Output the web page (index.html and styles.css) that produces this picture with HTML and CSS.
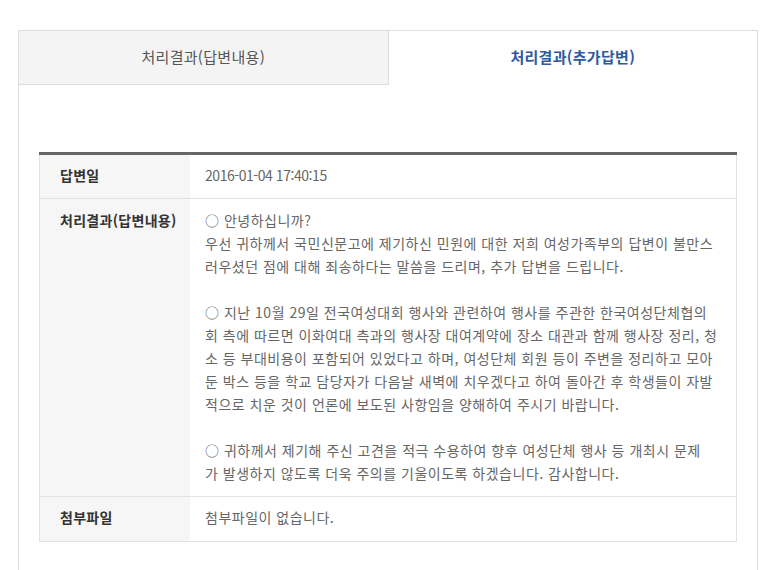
FILE: index.html
```html
<!DOCTYPE html>
<html lang="ko">
<head>
<meta charset="utf-8">
<link rel="stylesheet" href="styles.css">
</head>
<body>
<div class="box">
  <div class="tabs">
    <div class="tab">처리결과(답변내용)</div>
    <div class="tab active">처리결과(추가답변)</div>
  </div>
  <div class="content">
    <table class="info">
      <tr class="r1">
        <th>답변일</th>
        <td class="date">2016-01-04 17:40:15</td>
      </tr>
      <tr class="r2">
        <th>처리결과(답변내용)</th>
        <td>○ 안녕하십니까?<br>우선 귀하께서 국민신문고에 제기하신 민원에 대한 저희 여성가족부의 답변이 불만스<br>러우셨던 점에 대해 죄송하다는 말씀을 드리며, 추가 답변을 드립니다.<br><br>○ 지난 10월 29일 전국여성대회 행사와 관련하여 행사를 주관한 한국여성단체협의<br>회 측에 따르면 이화여대 측과의 행사장 대여계약에 장소 대관과 함께 행사장 정리, 청<br>소 등 부대비용이 포함되어 있었다고 하며, 여성단체 회원 등이 주변을 정리하고 모아<br>둔 박스 등을 학교 담당자가 다음날 새벽에 치우겠다고 하여 돌아간 후 학생들이 자발<br>적으로 치운 것이 언론에 보도된 사항임을 양해하여 주시기 바랍니다.<br><br>○ 귀하께서 제기해 주신 고견을 적극 수용하여 향후 여성단체 행사 등 개최시 문제<br>가 발생하지 않도록 더욱 주의를 기울이도록 하겠습니다. 감사합니다.</td>
      </tr>
      <tr class="r3">
        <th>첨부파일</th>
        <td>첨부파일이 없습니다.</td>
      </tr>
    </table>
  </div>
</div>
</body>
</html>
```
FILE: styles.css
```css
html, body {
  margin: 0;
  padding: 0;
  background: #fff;
}
body {
  font-family: "Noto Sans CJK KR", "Noto Sans", sans-serif;
  padding: 30px 0 0 18px;
}
.box {
  width: 738px;
  height: 600px;
  border: 1px solid #dddddd;
  border-bottom: none;
}
.tabs {
  display: flex;
}
.tab {
  flex: 1;
  height: 53px;
  line-height: 51px;
  text-align: center;
  font-size: 15px;
  letter-spacing: 0.3px;
  color: #555;
  background: #f4f4f4;
  border-bottom: 1px solid #dddddd;
  border-right: 1px solid #dddddd;
}
.tab.active {
  background: #fff;
  border-bottom: 1px solid transparent;
  border-right: none;
  color: #2f5a9e;
  font-weight: bold;
}
.content {
  padding: 67px 20px 0 20px;
}
.info {
  width: 698px;
  border-collapse: collapse;
  border-top: 3px solid #666;
  border-left: 1px solid #e2e2e2;
  border-right: 1px solid #e2e2e2;
  font-size: 14px;
}
.info tr {
  border-bottom: 1px solid #e2e2e2;
}
.info th {
  width: 130px;
  background: #f6f6f6;
  color: #333;
  font-weight: bold;
  letter-spacing: 0.3px;
  text-align: left;
  vertical-align: top;
  padding: 9px 0 11px 20px;
  line-height: 23px;
}
.info td {
  color: #666;
  padding: 9px 0 11px 15px;
  line-height: 23px;
  letter-spacing: 0.5px;
  vertical-align: top;
  white-space: nowrap;
}
.info td.date {
  letter-spacing: -0.45px;
}
.r2 th, .r2 td {
  padding-top: 10px;
  padding-bottom: 11px;
}
.r3 th, .r3 td {
  padding-bottom: 12px;
}
```
